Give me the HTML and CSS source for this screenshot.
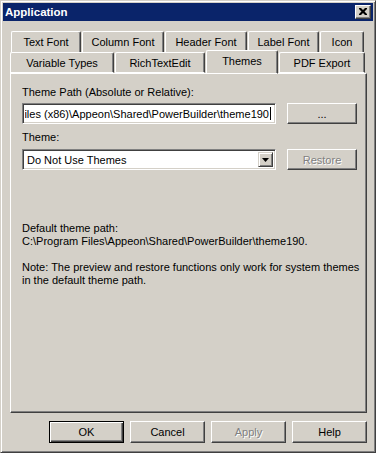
FILE: index.html
```html
<!DOCTYPE html>
<html lang="en">
<head>
    <meta charset="UTF-8">
    <meta name="viewport" content="width=device-width, initial-scale=1.0">
    <title>Application</title>
    <link rel="stylesheet" href="styles.css">
</head>
<body>
    <div class="window">
        <div class="titlebar">
            <span class="title">Application</span>
            <span class="close-btn">
                <svg width="8" height="7" viewBox="0 0 8 7">
                    <path d="M0 0h2l2 2 2-2h2v1l-2.5 2.5 2.5 2.5v1h-2l-2-2-2 2h-2v-1l2.5-2.5-2.5-2.5z" fill="#000"/>
                </svg>
            </span>
        </div>

        <div class="client">
            <div class="tab-row back">
                <div class="tab w-text">Text Font</div>
                <div class="tab w-column">Column Font</div>
                <div class="tab w-header">Header Font</div>
                <div class="tab w-label">Label Font</div>
                <div class="tab w-icon">Icon</div>
            </div>
            <div class="tab-row front">
                <div class="tab w-vartypes">Variable Types</div>
                <div class="tab w-rich">RichTextEdit</div>
                <div class="tab w-themes selected">Themes</div>
                <div class="tab w-pdf">PDF Export</div>
            </div>

            <div class="panel">
                <div class="label">Theme Path (Absolute or Relative):</div>
                <div class="field-row">
                    <div class="textbox">
                        <div class="textbox-scroll">
                            <span class="textbox-value">C:\Program Files (x86)\Appeon\Shared\PowerBuilder\theme190</span>
                            <span class="caret"></span>
                        </div>
                    </div>
                    <div class="btn side-btn">...</div>
                </div>

                <div class="label theme-label">Theme:</div>
                <div class="field-row">
                    <div class="combo">
                        <span class="combo-value">Do Not Use Themes</span>
                        <span class="combo-drop">
                            <svg width="7" height="4" viewBox="0 0 7 4">
                                <path d="M0 0h7l-3.5 4z" fill="#000"/>
                            </svg>
                        </span>
                    </div>
                    <div class="btn side-btn disabled">Restore</div>
                </div>

                <div class="info">
                    <p>Default theme path:<br>C:\Program Files\Appeon\Shared\PowerBuilder\theme190.</p>
                    <p>Note: The preview and restore functions only work for system themes in the default theme path.</p>
                </div>
            </div>

            <div class="buttons">
                <div class="btn dlg-btn default">OK</div>
                <div class="btn dlg-btn">Cancel</div>
                <div class="btn dlg-btn disabled">Apply</div>
                <div class="btn dlg-btn">Help</div>
            </div>
        </div>
    </div>
</body>
</html>
```

FILE: styles.css
```css
body {
    margin: 0;
    font-family: "Liberation Sans", Arial, sans-serif;
    font-size: 11px;
    color: #000;
    background: #d4d0c8;
}
.window {
    width: 376px;
    height: 453px;
    box-sizing: border-box;
    padding: 2px;
    background: #d4d0c8;
    border: 1px solid;
    border-color: #d4d0c8 #404040 #404040 #d4d0c8;
    box-shadow: inset 1px 1px #fff, inset -1px -1px #808080;
}
.titlebar {
    height: 18px;
    background: #0a246a;
    display: flex;
    align-items: center;
    justify-content: space-between;
}
.title {
    color: #fff;
    font-weight: bold;
    font-size: 11.5px;
    padding-left: 2px;
}
.close-btn {
    width: 16px;
    height: 14px;
    box-sizing: border-box;
    margin-right: 2px;
    background: #d4d0c8;
    border: 1px solid;
    border-color: #fff #404040 #404040 #fff;
    box-shadow: inset -1px -1px #808080;
    display: flex;
    align-items: center;
    justify-content: center;
}
.close-btn svg {
    margin: 0 1px 1px 0;
}
.client {
    padding-top: 10px;
}

/* tabs */
.tab-row {
    display: flex;
    gap: 1px;
    height: 21px;
}
.tab-row.back {
    padding-left: 8px;
}
.tab-row.front {
    padding-left: 7px;
}
.tab {
    box-sizing: border-box;
    height: 21px;
    display: flex;
    align-items: center;
    justify-content: center;
    background: #d4d0c8;
    border-top: 1px solid #fff;
    border-left: 1px solid #fff;
    border-right: 1px solid #404040;
    border-radius: 2px 2px 0 0;
    box-shadow: inset -1px 0 #808080;
}
.tab-row.front .tab {
    border-bottom: 1px solid #fff;
}
.tab.selected {
    position: relative;
    z-index: 1;
    height: 24px;
    margin-top: -2px;
    padding-bottom: 3px;
    border-bottom: none;
}
.w-text { width: 70px; }
.w-column { width: 82px; }
.w-header { width: 82px; }
.w-label { width: 71px; }
.w-icon { width: 44px; }
.w-vartypes { width: 104px; }
.w-rich { width: 90px; }
.w-themes { width: 72px; }
.w-pdf { width: 86px; }

/* panel */
.panel {
    margin-left: 7px;
    width: 357px;
    height: 340px;
    box-sizing: border-box;
    padding: 12px 0 0 11px;
    border: 1px solid;
    border-color: #fff #404040 #404040 #fff;
    box-shadow: inset -1px -1px #808080;
}
.label {
    line-height: 13px;
    margin-bottom: 4px;
}
.theme-label {
    margin-top: 7px;
    margin-bottom: 5px;
}
.field-row {
    display: flex;
    gap: 11px;
    align-items: flex-start;
}
.textbox,
.combo {
    width: 254px;
    height: 21px;
    box-sizing: border-box;
    background: #fff;
    border: 1px solid;
    border-color: #808080 #fff #fff #808080;
    box-shadow: inset 1px 1px #404040, inset -1px -1px #d4d0c8;
}
.textbox {
    padding: 1px 4px 1px 2px;
}
.textbox-scroll {
    height: 17px;
    display: flex;
    align-items: center;
    justify-content: flex-end;
    overflow: hidden;
    white-space: nowrap;
}
.caret {
    flex: none;
    width: 1px;
    height: 13px;
    margin-left: 1px;
    background: #000;
}
.combo {
    display: flex;
    align-items: center;
    justify-content: space-between;
    padding: 2px;
}
.combo-value {
    padding-left: 2px;
}
.combo-drop {
    width: 15px;
    height: 15px;
    box-sizing: border-box;
    border: 1px solid;
    border-color: #d4d0c8 #404040 #404040 #d4d0c8;
    box-shadow: inset 1px 1px #fff, inset -1px -1px #808080;
    background: #d4d0c8;
    display: flex;
    align-items: center;
    justify-content: center;
}

/* buttons */
.btn {
    box-sizing: border-box;
    display: flex;
    align-items: center;
    justify-content: center;
    background: #d4d0c8;
    border: 1px solid;
    border-color: #fff #404040 #404040 #fff;
    box-shadow: inset -1px -1px #808080;
}
.btn.disabled {
    color: #808080;
    text-shadow: 1px 1px #fff;
}
.side-btn {
    width: 70px;
    height: 21px;
}
.info {
    margin-top: 52px;
    line-height: 13px;
}
.info p {
    margin: 0;
}
.info p + p {
    margin-top: 13px;
}
.buttons {
    display: flex;
    justify-content: flex-end;
    gap: 6px;
    margin-top: 8px;
    padding-right: 6px;
}
.dlg-btn {
    width: 75px;
    height: 22px;
}
.dlg-btn.default {
    border-color: #000;
    box-shadow: inset 1px 1px #fff, inset -1px -1px #404040, inset -2px -2px #808080;
}
```
